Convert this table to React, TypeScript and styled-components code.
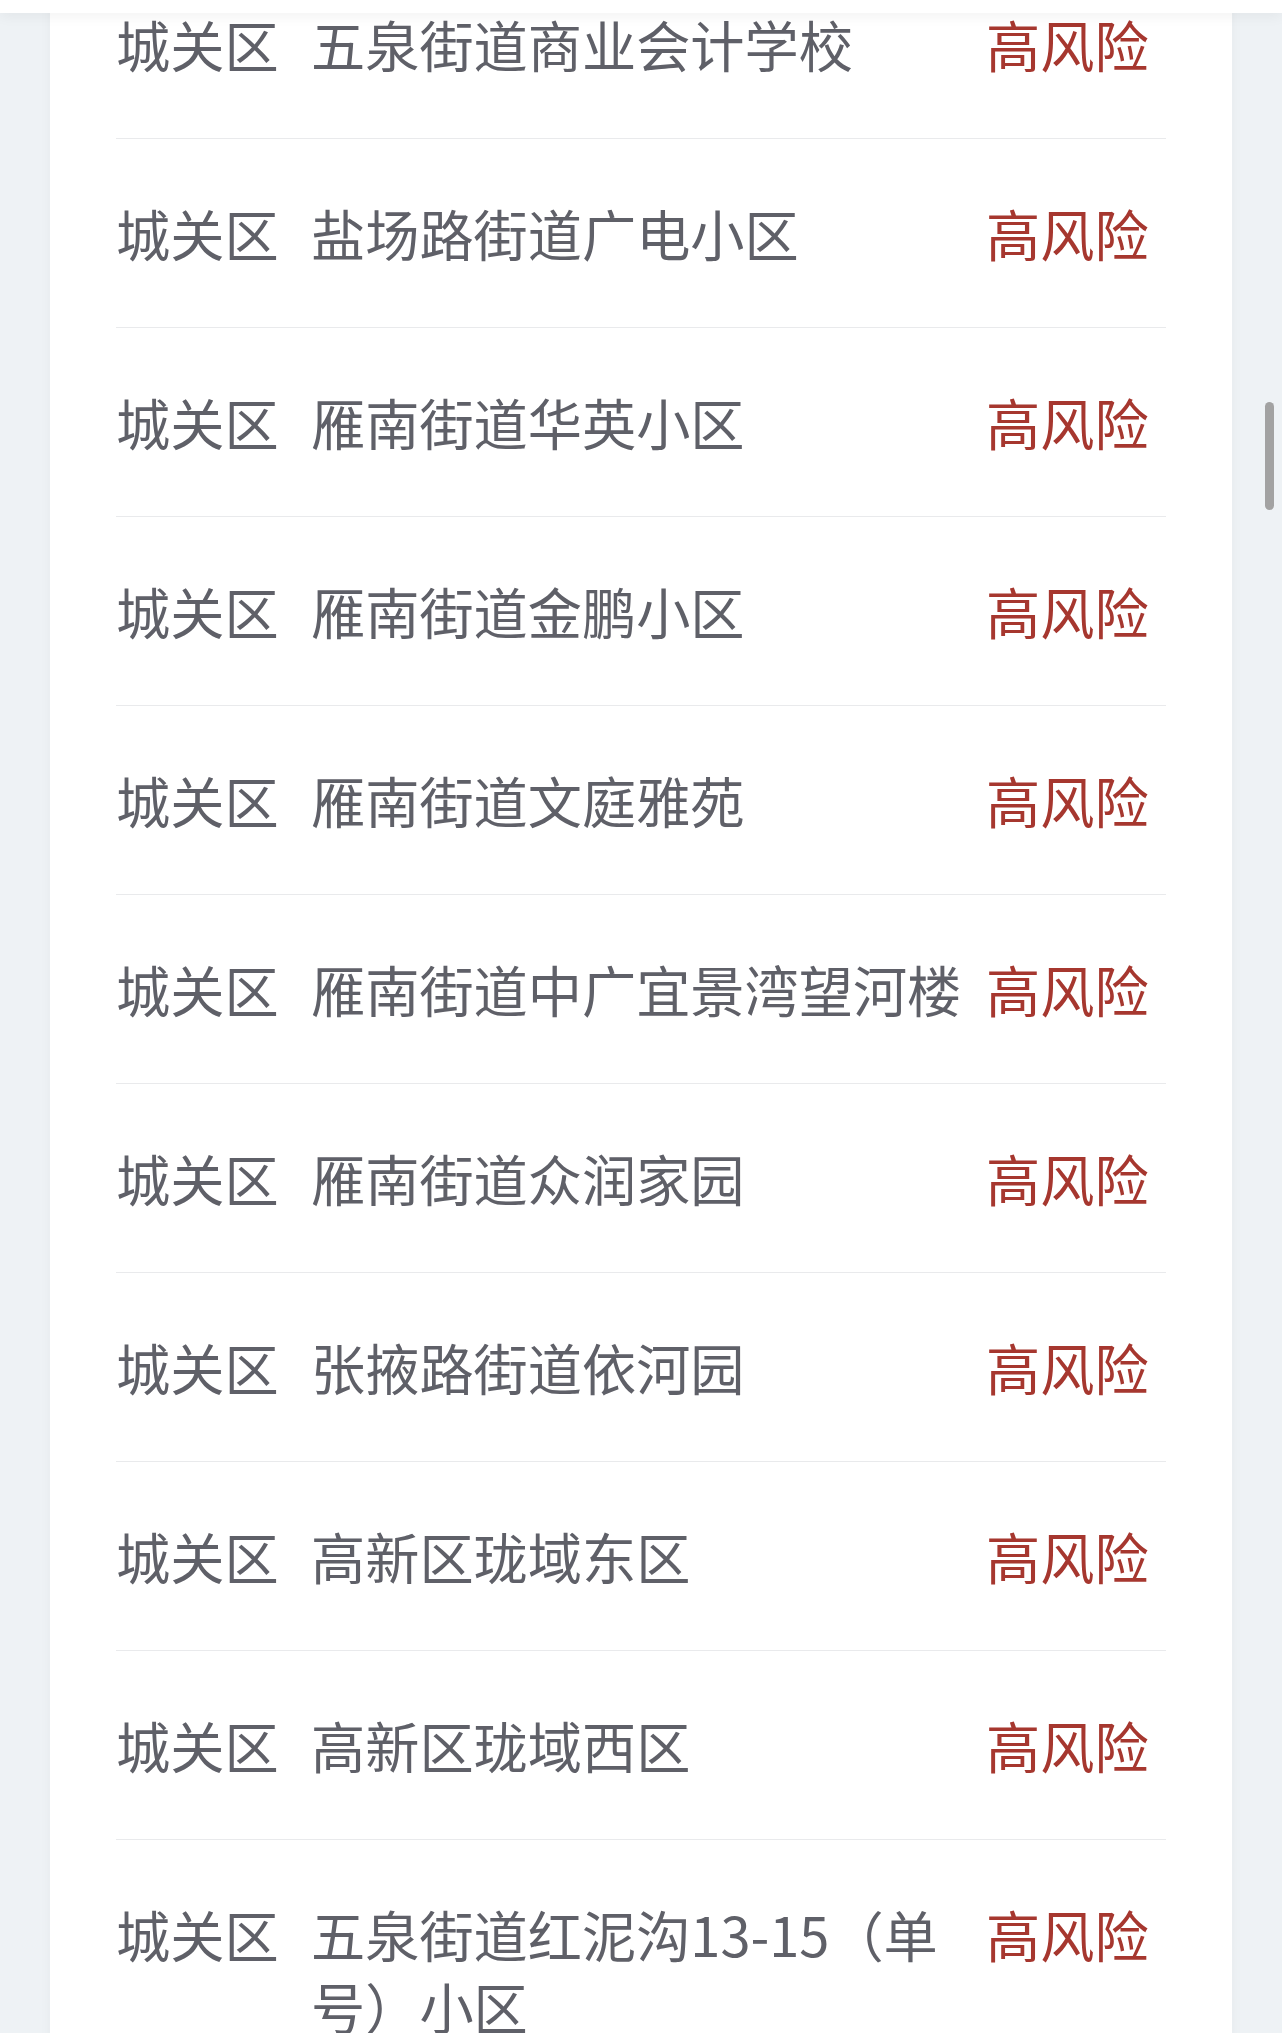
import React from "react";
import styled, { createGlobalStyle } from "styled-components";

const GlobalStyle = createGlobalStyle`
  html, body {
    margin: 0;
    padding: 0;
    background: #eef2f5;
    overflow: hidden;
  }
  #root {
    height: 2033px;
  }
`;

const Page = styled.div`
  position: relative;
  height: 2033px;
  display: flex;
  flex-direction: column;
  overflow: hidden;
  background: #eef2f5;
  font-family: "Noto Sans CJK SC", "Noto Sans", sans-serif;
`;

const Header = styled.div`
  flex: 0 0 13px;
  background: #ffffff;
  box-shadow: 0 3px 14px rgba(0, 0, 0, 0.06);
  position: relative;
  z-index: 2;
`;

const Viewport = styled.div`
  flex: 1;
  overflow: hidden;
  padding: 0 50px;
`;

const Card = styled.div`
  background: #ffffff;
  padding: 0 66px;
  box-shadow: 0 0 12px rgba(0, 0, 0, 0.04);
  min-height: 100%;
`;

const List = styled.div`
  margin-top: -63px;
  display: flex;
  flex-direction: column;
`;

const Row = styled.div`
  display: grid;
  grid-template-columns: 195px 675px 1fr;
  padding: 58px 0;
  border-bottom: 1px solid #e9eaec;
  font-size: 54.2px;
  line-height: 72px;
`;

const District = styled.span`
  color: #5f6068;
  white-space: nowrap;
`;

const Name = styled.span`
  color: #5f6068;
  word-break: break-all;
`;

const Risk = styled.span<{ $level: "high" | "mid" }>`
  color: ${(p) => (p.$level === "high" ? "#a6372f" : "#d08a2c")};
  white-space: nowrap;
`;

const ScrollThumb = styled.div`
  position: absolute;
  right: 8px;
  top: 402px;
  width: 9px;
  height: 108px;
  border-radius: 5px;
  background: #a2a2a2;
  z-index: 3;
`;

const rows = [
  "五泉街道商业会计学校",
  "盐场路街道广电小区",
  "雁南街道华英小区",
  "雁南街道金鹏小区",
  "雁南街道文庭雅苑",
  "雁南街道中广宜景湾望河楼",
  "雁南街道众润家园",
  "张掖路街道依河园",
  "高新区珑域东区",
  "高新区珑域西区",
  "五泉街道红泥沟13-15（单号）小区",
];

export default function App() {
  return (
    <>
      <GlobalStyle />
      <Page>
        <Header />
        <Viewport>
          <Card>
            <List>
              {rows.map((name) => (
                <Row key={name}>
                  <District>城关区</District>
                  <Name>{name}</Name>
                  <Risk $level="high">高风险</Risk>
                </Row>
              ))}
            </List>
          </Card>
        </Viewport>
        <ScrollThumb />
      </Page>
    </>
  );
}
